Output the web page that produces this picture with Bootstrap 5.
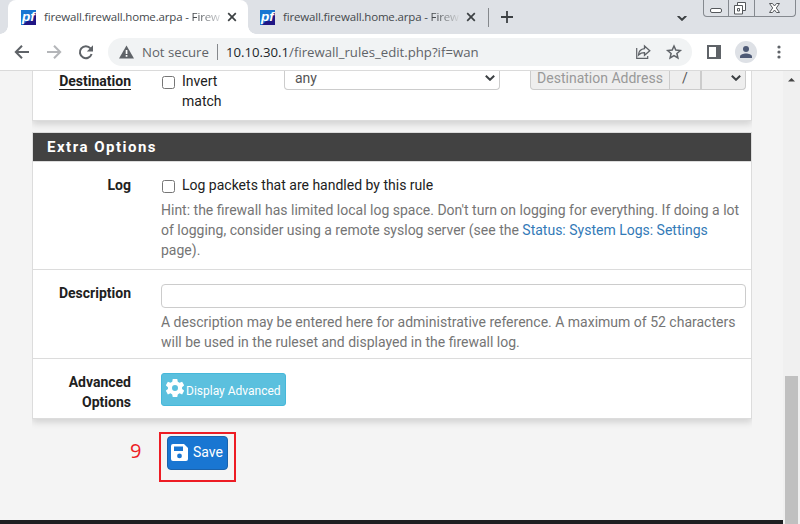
<!DOCTYPE html>
<html lang="en">
<head>
<meta charset="utf-8">
<meta name="viewport" content="width=device-width, initial-scale=1">
<title>firewall.firewall.home.arpa - Firewall: Rules: Edit</title>
<link href="https://cdn.jsdelivr.net/npm/bootstrap@5.3.0/dist/css/bootstrap.min.css" rel="stylesheet">
<style>
body{width:800px;height:524px;overflow:hidden;background:#f4f4f4;font:14px/20px Roboto,sans-serif;color:#212121}
svg{display:block;flex:none}
.tabstrip{height:34px;background:#dee1e6;font:11.5px/34px "Open Sans",sans-serif;letter-spacing:-.16px;color:#45494d}
.flare{width:8px;height:8px;flex:none;align-self:flex-end;background:radial-gradient(circle at 0 0,#dee1e6 7.5px,#fff 8px)}
.flare-right{background:radial-gradient(circle at 100% 0,#dee1e6 7.5px,#fff 8px)}
.chrome-tab{height:34px}
.chrome-tab.current{width:240px;padding-left:13px;background:#fff;border-radius:8px 8px 0 0}
.tab-title{width:175px;margin-left:8px;white-space:nowrap}
.tab-title .fade-end{background:linear-gradient(90deg,#45494d 20%,#d5d7da);-webkit-background-clip:text;background-clip:text;color:transparent}
.favicon{width:15px;height:15px}
.tab-sep{width:1px;height:19px;background:#85888c}
.omnibox .tab-sep{height:16px;margin:0 8px}
.winbtns{height:17px;border:1px solid #85898f;border-top:0;border-radius:0 0 4px 4px;width:93px}
.winbtns>div+div{border-left:1px solid #85898f}
.toolbar{height:36px;background:#fff}
.omnibox{height:28px;width:584px;border-radius:14px;background:#f1f3f4;font:13.2px/28px "Open Sans",sans-serif;color:#5f6368;padding-left:11px;white-space:nowrap}
.avatar{width:22px;height:22px;border-radius:50%;background:#dee1e6;margin-left:14px}
.sidepanel{margin-left:15px}
.kebab{margin-left:20px}
.viewport{height:454px;border-top:1px solid #dadada}
.content-col{width:783px;padding-left:32px}
.panel{width:720px;background:#fff;border:1px solid #dcdcdc;box-shadow:0 3px 7px rgba(0,0,0,.15);clip-path:inset(0 0 -12px 0)}
.panel-top{height:50px;border-top:0;margin-bottom:11px}
.panel-head{height:29px;background:#424242;color:#fff;font-weight:700;font-size:15px;line-height:28px;letter-spacing:1.5px;padding-left:14px;border-bottom:1px solid #dcdcdc}
.field{padding-top:13px}
.field+.field{border-top:1px solid #dcdcdc}
.field-label{width:98px;margin-right:30px;text-align:right;font-weight:700;flex:none}
.dest{display:inline-block;height:19px;border-bottom:1px solid #212121}
.field-body{white-space:nowrap}
.hint{color:#757575}
.hint a{color:#337ab7;text-decoration:none}
.box{width:13px;height:13px;border:1px solid #767676;border-radius:2.5px;background:#fff;flex:none;margin:5px 7px 0 1px}
.invert{width:123px}
.ctl{height:19px;border:1px solid #ccc;border-top:0;line-height:14px;color:#555}
.sel-any{width:216px;border-radius:0 0 4px 4px;padding-left:10px}
.off{background:#eee}
.dest-group{margin-left:30px}
.dest-addr{width:140px;color:#999;border-radius:0 0 0 4px}
.dest-slash{width:31px}
.dest-mask{width:45px;border-radius:0 0 4px 0}
.desc-input{width:585px;height:24px;border:1px solid #ccc;border-radius:4px;padding:0;margin:1px 0 4px}
.btn-adv{width:125px;height:33px;background:#5bc0de;border:1px solid #46b8da;border-radius:3px;color:#fff;font-size:12px;padding:0 0 0 4px;margin-top:1px}
.btn-adv svg{margin:-3px 2px 0 0}
.btn-adv span{padding-top:3px}
.save-row{padding-top:13px}
.callout-num{width:12px;margin-left:98px;margin-right:17px;color:#ed1c24;font:20px/37px "Open Sans",sans-serif}
.callout-frame{width:77px;height:50px;border:2px solid #ed1c24;padding:2px 0 0 6px}
.btn-keep{width:61px;height:34px;background:#1976d2;border:1px solid #1b62ab;border-radius:4px;color:#fff;font-size:14px;padding:0 0 1px 3px}
.btn-keep svg{margin-right:5px}
.foot{height:4px;background:#1e1e21;margin-left:-32px}
.scroller{width:17px;background:#f0f0f0}
.scroller .thumb{width:13px;height:148px;background:#c0c0c0;margin-left:2px}
</style>
<script src="https://cdn.jsdelivr.net/npm/bootstrap@5.3.0/dist/js/bootstrap.bundle.min.js"></script>
</head>
<body>
<svg width="0" height="0" class="d-none">
<symbol id="pf" viewBox="0 0 15 15"><path fill="#1976d2" d="M0 0h15v15H0z"/><path fill="#211785" d="M15 2v13H2L6 11h3l3-7z"/><text x="1" y="11" font-family="Liberation Sans" font-style="italic" font-weight="700" font-size="12.5" fill="#fff" textLength="12.500" lengthAdjust="spacingAndGlyphs">pf</text></symbol>
<symbol id="x" viewBox="0 0 10 10"><path d="M1.2 1.2l7.6 7.6M8.8 1.2L1.2 8.8" stroke="#3c4043" stroke-width="1.7"/></symbol>
<symbol id="chev" viewBox="0 0 10 6"><path d="M.8 .8L5 4.8 9.2 .8" fill="none" stroke="#3c4043" stroke-width="2"/></symbol>
</svg>
<header>
<div class="tabstrip d-flex">
  <span class="flare"></span>
  <div class="chrome-tab current d-flex align-items-center"><svg class="favicon"><use href="#pf"/></svg><span class="tab-title">firewall.firewall.home.arpa - <span class="fade-end">Firew</span></span><svg width="10" height="10" class="ms-2"><use href="#x"/></svg></div>
  <span class="flare flare-right"></span>
  <div class="chrome-tab d-flex align-items-center ps-1"><svg class="favicon"><use href="#pf"/></svg><span class="tab-title">firewall.firewall.home.arpa - <span class="fade-end">Firew</span></span><svg width="10" height="10" class="ms-2"><use href="#x"/></svg></div>
  <div class="d-flex align-items-center ms-1 ps-1"><span class="tab-sep ms-1 me-1"></span><svg width="12" height="12" class="ms-2 ps-0"><path d="M6 0v12M0 6h12" stroke="#3c4043" stroke-width="1.8" transform="translate(0 0)"/></svg></div>
  <div class="ms-auto d-flex me-1">
    <svg width="10" height="6" class="me-3 mt-3"><use href="#chev" y="-1"/></svg>
    <div class="winbtns d-flex">
      <div class="flex-fill"><svg width="24" height="16"><rect x="6.500" y="8.500" width="11" height="4" rx="1.500" fill="#fff" stroke="#55585c"/></svg></div>
      <div class="flex-fill"><svg width="24" height="16"><path d="M8.500 2.500h8v8h-8z" fill="#fff" stroke="#55585c"/><path d="M5.500 5.500h8v8.500h-8z" fill="#fff" stroke="#55585c"/><path d="M8.500 8.500h2v2.500h-2z" fill="#fff" stroke="#55585c"/></svg></div>
      <div class="flex-fill"><svg width="40" height="16"><path d="M14.500 3.500h3l2 2.500 2-2.500h3l-3.200 4.500 3.200 4.500h-3l-2-2.500-2 2.500h-3l3.200-4.500z" fill="#fff" stroke="#55585c"/></svg></div>
    </div>
  </div>
</div>
<div class="toolbar d-flex align-items-center">
  <svg width="108" height="36" fill="none" stroke="#5f6368" stroke-width="2"><path d="M29 18H16.500M22 11.700L15.800 18l6.200 6.300"/><path stroke="#b4b6b9" d="M47 18h13M54 11.700l6.200 6.300-6.200 6.300"/><path d="M90.500 14.300A6 6 0 1 0 91.600 20"/><path d="M93 11.300v6.200h-6.200z" fill="#5f6368" stroke="none"/></svg>
  <div class="omnibox d-flex align-items-center">
    <svg width="15" height="14" class="me-2"><path d="M7.500.5L15 13.500H0z" fill="#5f6368"/><path d="M6.700 5h1.700v4H6.700zM6.700 10h1.700v1.700H6.700z" fill="#fff"/></svg>
    <span>Not secure</span><span class="tab-sep"></span><span><span class="text-dark">10.10.30.1</span>/firewall_rules_edit.php?if=wan</span>
    <svg width="48" height="16" class="ms-auto me-2" fill="none" stroke="#5f6368"><g transform="translate(-1.500 0)"><path stroke-width="1.200" d="M1.200 4v10.300h11V12" transform="translate(1 0)"/><path stroke-width="1.300" d="M4 11C4.300 7 6.500 5 10 4.700V2l5.300 4.700L10 11.300V8.700C7 8.700 5.500 9.500 4 11z"/><path stroke-width="1.500" d="M39.500 2l1.800 4.100 4.500.4-3.400 3 1 4.400-3.900-2.300-3.900 2.300 1-4.400-3.400-3 4.500-.4z"/></g></svg>
  </div>
  <svg width="14" height="14" class="sidepanel"><path fill="#5f6368" d="M0 0h14v14H0z"/><path fill="#fff" d="M2 2h7v10H2z"/></svg>
  <div class="avatar"><svg width="22" height="22"><circle cx="11" cy="8" r="3" fill="#4d5975"/><path d="M5 17v-1.500C5 13.500 8.500 12.500 11 12.500s6 1 6 3V17z" fill="#4d5975"/></svg></div>
  <svg width="4" height="14" class="kebab" fill="#5f6368"><circle cx="2" cy="2" r="1.600"/><circle cx="2" cy="7" r="1.600"/><circle cx="2" cy="12" r="1.600"/></svg>
</div>
</header>
<div class="viewport d-flex">
<main class="content-col d-flex flex-column">
  <section class="panel panel-top d-flex">
    <div class="field-label"><span class="dest">Destination</span></div>
    <div class="d-flex invert"><span class="box"></span><div>Invert<br>match</div></div>
    <div class="ctl sel-any d-flex justify-content-between">any<svg width="10" height="6" class="mt-1 me-1"><use href="#chev"/></svg></div>
    <div class="d-flex dest-group">
      <div class="ctl off text-center dest-addr">Destination Address</div>
      <div class="ctl off text-center border-start-0 dest-slash">/</div>
      <div class="ctl off d-flex justify-content-end dest-mask"><svg width="10" height="6" class="mt-1 me-1"><use href="#chev"/></svg></div>
    </div>
  </section>
  <section class="panel">
    <div class="panel-head">Extra Options</div>
    <div class="field d-flex" style="height:107px">
      <div class="field-label">Log</div>
      <div class="field-body">
        <div class="d-flex mb-1 pb-1"><span class="box"></span><span>Log packets that are handled by this rule</span></div>
        <div class="hint" style="margin-top:-3px"><span>Hint: the firewall has limited local log space. Don't turn on logging for everything. If doing a lot</span><br><span>of logging, consider using a remote syslog server (see the <a href="#">Status: System Logs: Settings</a></span><br>page).</div>
      </div>
    </div>
    <div class="field d-flex" style="height:89px">
      <div class="field-label">Description</div>
      <div class="field-body"><input class="desc-input d-block" type="text" aria-label="Description"><div class="hint"><span>A description may be entered here for administrative reference. A maximum of 52 characters</span><br><span>will be used in the ruleset and displayed in the firewall log.</span></div></div>
    </div>
    <div class="field d-flex" style="height:60px">
      <div class="field-label">Advanced<br>Options</div>
      <div class="field-body"><button class="btn btn-adv d-flex align-items-center"><svg width="18" height="18" viewBox="0 0 24 24" fill="#fff"><path fill-rule="evenodd" d="M9 0h6l.7 3.600 2.300 1.300L21.500 3.500l2.800 5L21.400 11v2.200l2.900 2.300-2.800 5-3.500-1.400-2.300 1.400L15 24H9l-.7-3.500L6 19.100l-3.500 1.400-2.800-5L2.600 13.200V11L-.3 8.500l2.800-5L6 4.900l2.300-1.300zM12 8a4 4 0 1 0 0 8 4 4 0 0 0 0-8z"/></svg><span>Display Advanced</span></button></div>
    </div>
  </section>
  <div class="save-row d-flex">
    <span class="callout-num">9</span>
    <div class="callout-frame"><button class="btn btn-keep d-flex align-items-center"><svg width="17" height="17"><path fill="#fff" fill-rule="evenodd" d="M2 0h11l4 4v11a2 2 0 0 1-2 2H2a2 2 0 0 1-2-2V2a2 2 0 0 1 2-2zM3 2.500v4.500h9v-4.500zM8.500 9.500a2.400 2.400 0 1 0 0 4.800 2.400 2.400 0 0 0 0-4.800z"/></svg><span>Save</span></button></div>
  </div>
  <div class="foot mt-auto"></div>
</main>
<div class="scroller d-flex flex-column justify-content-between"><svg width="16" height="14"><path d="M5 10.500h7L8.500 7z" fill="#444"/></svg><div class="thumb"></div></div>
</div>
</body>
</html>
